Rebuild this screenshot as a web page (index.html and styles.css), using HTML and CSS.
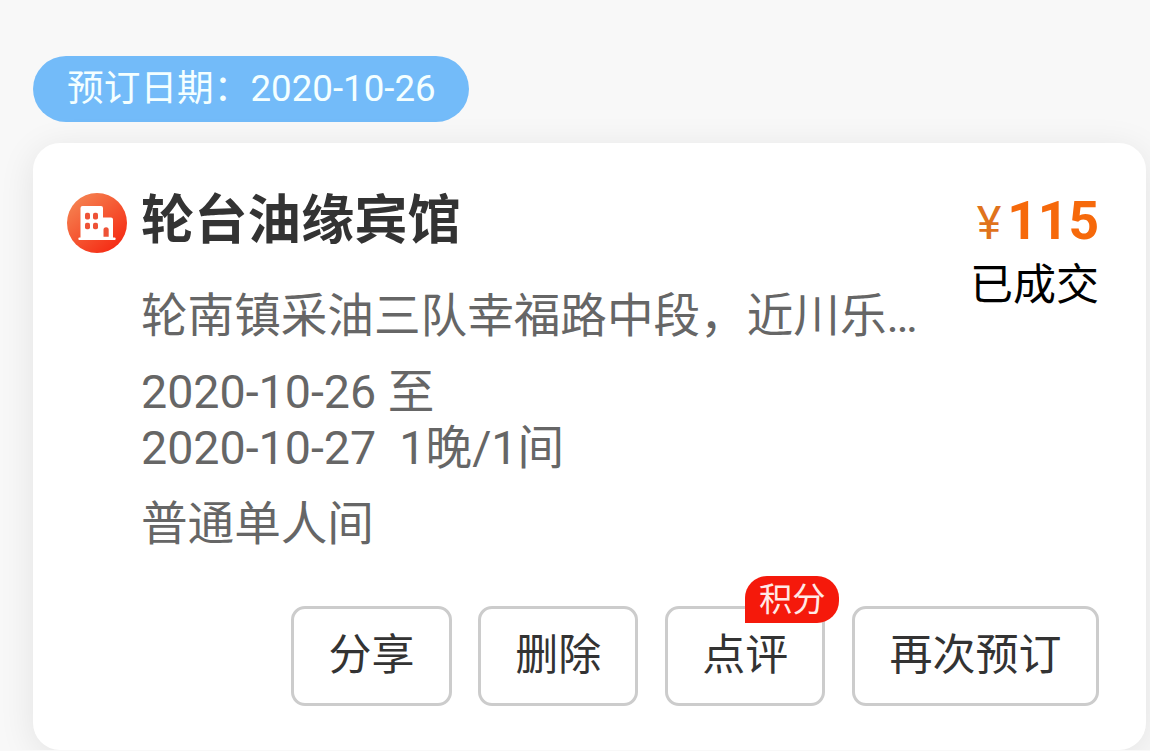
FILE: index.html
```html
<!DOCTYPE html>
<html lang="zh-CN">
	<head>
		<meta charset="UTF-8">
		<title>酒店订单</title>
		<link rel="stylesheet" href="styles.css">
	</head>
	<body>
		<div class="page">
			<p class="book-date">预订日期：2020-10-26</p>
			<div class="order">
				<div class="order-main">
					<svg class="hotel-icon" viewBox="0 0 60 60">
						<defs>
							<linearGradient id="hotelBg" x1="0.15" y1="0.1" x2="0.8" y2="0.9">
								<stop offset="0" stop-color="#f5804f"/>
								<stop offset="1" stop-color="#f52e16"/>
							</linearGradient>
						</defs>
						<circle cx="30" cy="30" r="30" fill="url(#hotelBg)"/>
						<path fill="#fff" d="M15.500 13H34a2 2 0 0 1 2 2v9.500h8a2 2 0 0 1 2 2V44.500h1.500a1.200 1.200 0 0 1 0 2.400H12.500a1.200 1.200 0 0 1 0-2.400h1V15a2 2 0 0 1 2-2z"/>
						<g fill="#ee5236">
							<rect x="18" y="19.700" width="5" height="6.800" rx="1.800"/>
							<rect x="26" y="19.700" width="5" height="6.800" rx="1.800"/>
							<rect x="18" y="29.700" width="5" height="6.600" rx="1.800"/>
							<rect x="26" y="29.700" width="5" height="6.600" rx="1.800"/>
							<path d="M36.500 43.800h5.200v-7a2.600 2.600 0 0 0-5.200 0z"/>
						</g>
					</svg>
					<div class="info">
						<h2>轮台油缘宾馆</h2>
						<p>轮南镇采油三队幸福路中段，近川乐…</p>
						<p>2020-10-26 至<br>2020-10-27&nbsp; 1晚/1间</p>
						<p>普通单人间</p>
					</div>
					<div class="price">
						<p class="money"><span>¥</span>115</p>
						<p class="status">已成交</p>
					</div>
				</div>
				<div class="btns">
					<button>分享</button>
					<button>删除</button>
					<button>点评<span class="badge">积分</span></button>
					<button class="wide">再次预订</button>
				</div>
			</div>
		</div>
	</body>
</html>
```
FILE: styles.css
```css
*{
	margin:0;
	padding:0;
	box-sizing:border-box;
}
body{
	background:#f8f8f8;
	font-family:Roboto,"Noto Sans CJK SC",sans-serif;
	color:#333;
	overflow:hidden;
}
.page{
	padding:56px 4px 0 33px;
}
.book-date{
	width:436px;
	height:66px;
	padding-left:34px;
	border-radius:33px;
	background:#73bbf9;
	color:#f4ffff;
	font-size:36.7px;
	line-height:66px;
	white-space:nowrap;
}
.order{
	height:607px;
	margin-top:21px;
	padding:48px 47px 0 34px;
	border-radius:27px;
	background:#fff;
	box-shadow:0 6px 36px rgba(0,0,0,0.09);
}
.order-main{
	display:flex;
	height:415px;
}
.hotel-icon{
	flex:none;
	width:60px;
	height:60px;
	margin:2px 14px 0 0;
}
.info{
	flex:1;
	white-space:nowrap;
}
.info h2{
	margin-bottom:37px;
	font-size:53.3px;
	line-height:60px;
}
.info p{
	margin-bottom:20px;
	color:#666;
	font-size:46.6px;
	line-height:56px;
}
.price{
	text-align:right;
	white-space:nowrap;
}
.money{
	color:#f6690b;
	font-size:53.3px;
	font-weight:bold;
	line-height:60px;
}
.money span{
	margin-right:6px;
	color:#e0731c;
	font-size:46.7px;
	font-weight:normal;
}
.status{
	margin-top:7px;
	color:#000;
	font-size:43px;
	line-height:50px;
}
.btns{
	display:flex;
	justify-content:flex-end;
	gap:26.7px;
}
.btns button{
	position:relative;
	width:160.2px;
	height:100px;
	padding-bottom:3px;
	border:3px solid #ccc;
	border-radius:14px;
	background:#fff;
	color:#333;
	font-family:inherit;
	font-size:43px;
	line-height:50px;
	white-space:nowrap;
}
.btns .wide{
	width:247px;
}
.badge{
	position:absolute;
	top:-33px;
	right:-17px;
	width:94px;
	height:47px;
	border-radius:22px 22px 22px 0;
	background:#f5190b;
	color:#ffe9e6;
	font-size:33.3px;
	line-height:48px;
	text-align:center;
}
```
